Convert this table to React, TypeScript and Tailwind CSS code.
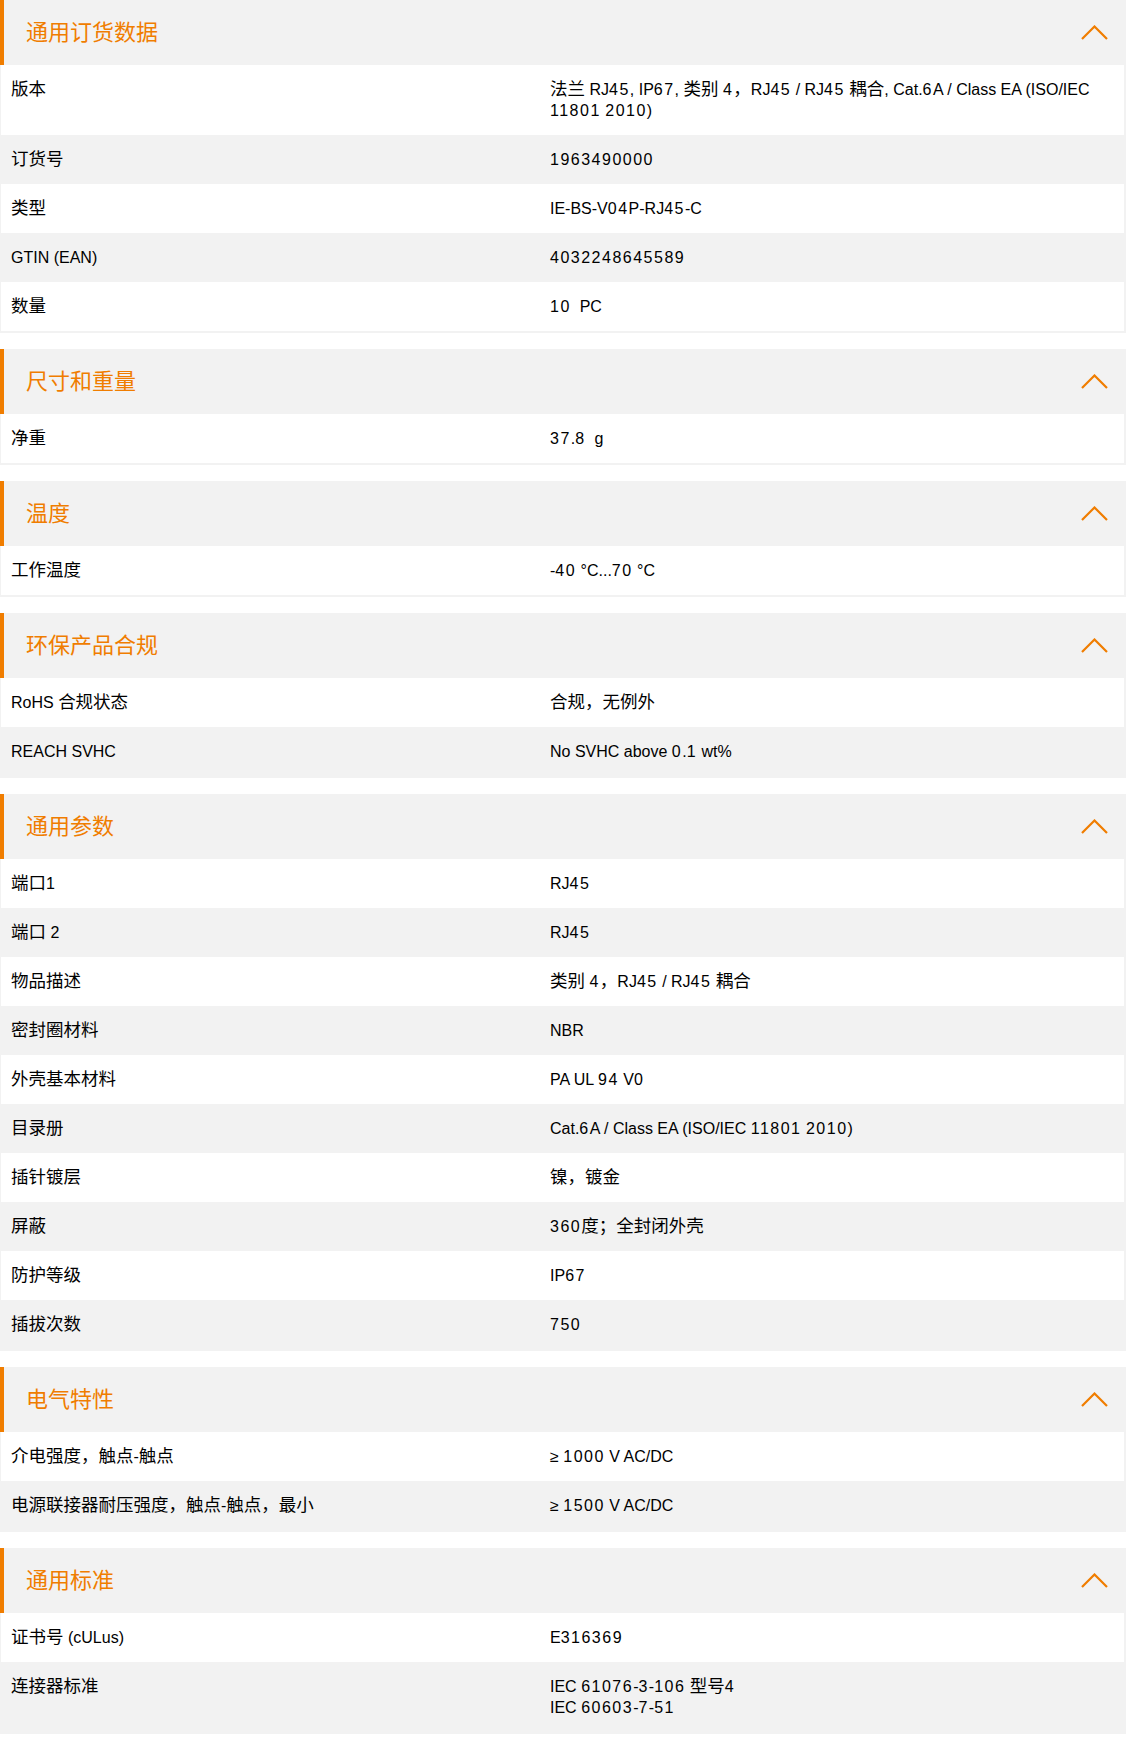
import { Fragment } from 'react';

type Row = { label: string; value: string[] };
type Section = { title: string; rows: Row[] };

const sections: Section[] = [
  {
    title: '通用订货数据',
    rows: [
      { label: '版本', value: ['法兰 RJ45, IP67, 类别 4，RJ45 / RJ45 耦合, Cat.6A / Class EA (ISO/IEC', '11801 2010)'] },
      { label: '订货号', value: ['1963490000'] },
      { label: '类型', value: ['IE-BS-V04P-RJ45-C'] },
      { label: 'GTIN (EAN)', value: ['4032248645589'] },
      { label: '数量', value: ['10\u00a0 PC'] },
    ],
  },
  {
    title: '尺寸和重量',
    rows: [{ label: '净重', value: ['37.8\u00a0 g'] }],
  },
  {
    title: '温度',
    rows: [{ label: '工作温度', value: ['-40 °C...70 °C'] }],
  },
  {
    title: '环保产品合规',
    rows: [
      { label: 'RoHS 合规状态', value: ['合规，无例外'] },
      { label: 'REACH SVHC', value: ['No SVHC above 0.1 wt%'] },
    ],
  },
  {
    title: '通用参数',
    rows: [
      { label: '端口1', value: ['RJ45'] },
      { label: '端口 2', value: ['RJ45'] },
      { label: '物品描述', value: ['类别 4，RJ45 / RJ45 耦合'] },
      { label: '密封圈材料', value: ['NBR'] },
      { label: '外壳基本材料', value: ['PA UL 94 V0'] },
      { label: '目录册', value: ['Cat.6A / Class EA (ISO/IEC 11801 2010)'] },
      { label: '插针镀层', value: ['镍，镀金'] },
      { label: '屏蔽', value: ['360度；全封闭外壳'] },
      { label: '防护等级', value: ['IP67'] },
      { label: '插拔次数', value: ['750'] },
    ],
  },
  {
    title: '电气特性',
    rows: [
      { label: '介电强度，触点-触点', value: ['≥ 1000 V AC/DC'] },
      { label: '电源联接器耐压强度，触点-触点，最小', value: ['≥ 1500 V AC/DC'] },
    ],
  },
  {
    title: '通用标准',
    rows: [
      { label: '证书号 (cULus)', value: ['E316369'] },
      { label: '连接器标准', value: ['IEC 61076-3-106 型号4', 'IEC 60603-7-51'] },
    ],
  },
];

// CJK glyphs render a bit larger than latin text, digits in values are wider
const Mixed = ({ text, digits = false }: { text: string; digits?: boolean }) => {
  const parts = text.split(/([\u3000-\u303f\u4e00-\u9fff\uff00-\uffef]+|[0-9]+)/);
  return (
    <>
      {parts.map((p, i) => {
        if (i % 2 === 0) return <Fragment key={i}>{p}</Fragment>;
        if (/^[0-9]+$/.test(p)) {
          return digits ? (
            <span key={i} className="tracking-[1.5px]">
              {p}
            </span>
          ) : (
            <Fragment key={i}>{p}</Fragment>
          );
        }
        return (
          <span key={i} className="text-[17.5px]">
            {p}
          </span>
        );
      })}
    </>
  );
};

const Chevron = () => (
  <svg width="27" height="15" viewBox="0 0 27 15" fill="none" className="text-[#f07d00]">
    <polyline points="1,14 13.5,1.5 26,14" stroke="currentColor" strokeWidth="2.2" />
  </svg>
);

const App = () => {
  return (
    <div
      className="w-[1126px] bg-white pb-[14px] text-black"
      style={{ fontFamily: '"Liberation Sans", "Noto Sans CJK SC", sans-serif' }}
    >
      {sections.map(section => (
        <div key={section.title} className="mb-4 border-b-2 border-l border-r-2 border-[#f2f2f2] last:mb-0">
          {/* Section header */}
          <div className="-ml-px flex h-[65px] items-center justify-between border-l-4 border-[#f07d00] bg-[#f2f2f2] pl-[22px] pr-[16px]">
            <h2 className="text-[22px] leading-none font-normal text-[#f07d00]">{section.title}</h2>
            <Chevron />
          </div>

          {/* Rows */}
          {section.rows.map((row, idx) => (
            <div
              key={row.label}
              className={`flex py-[14px] text-[16px] leading-[21px] ${idx % 2 === 1 ? 'bg-[#f2f2f2]' : 'bg-white'}`}
            >
              <div className="w-[549px] shrink-0 pl-[10px]">
                <Mixed text={row.label} />
              </div>
              <div className="flex-1 pr-4">
                {row.value.map(line => (
                  <div key={line}>
                    <Mixed text={line} digits />
                  </div>
                ))}
              </div>
            </div>
          ))}
        </div>
      ))}
    </div>
  );
};

export default App;
